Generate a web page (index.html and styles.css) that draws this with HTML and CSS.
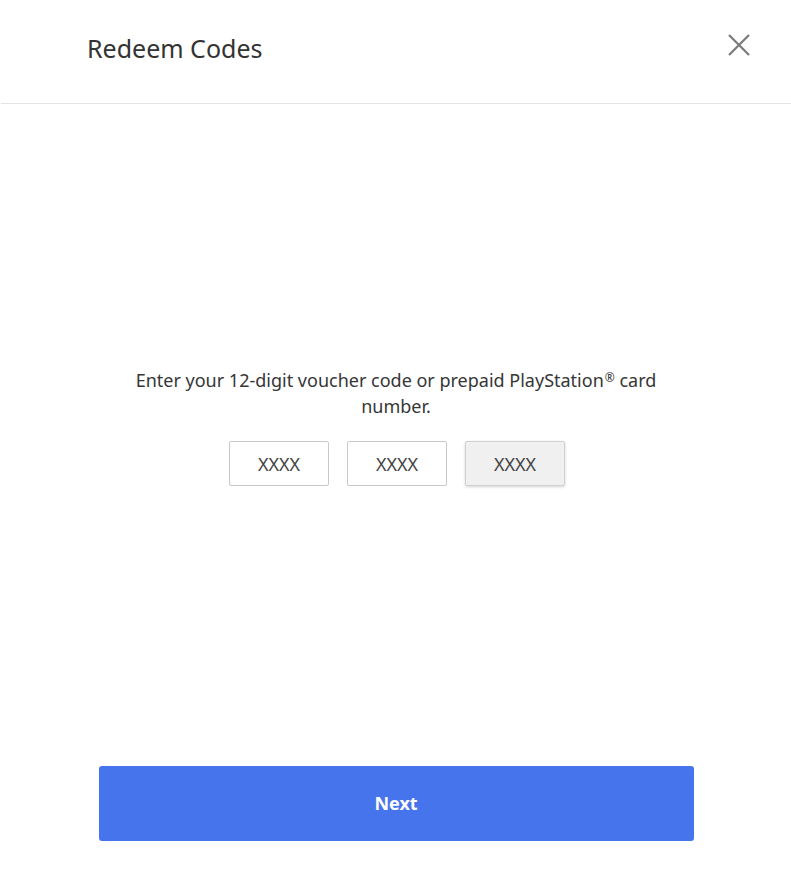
FILE: index.html
```html
<!doctype html>
<html lang="en">
<head>
	<meta charset="UTF-8">
	<title>Redeem Codes</title>
	<link rel="stylesheet" href="styles.css">
</head>
<body>
	<div class="dialog">
		<div class="dialog-head">
			<h1 class="title">Redeem Codes</h1>
			<a class="close" href="javascript:void(0);">
				<svg width="24" height="24" viewBox="0 0 24 24"><path d="M2 2L22 22M22 2L2 22" stroke="#7a7a7a" stroke-width="2.2" fill="none"/></svg>
			</a>
		</div>
		<div class="dialog-body">
			<p class="hint">Enter your 12-digit voucher code or prepaid PlayStation<span class="reg">®</span> card number.</p>
			<div class="code-row">
				<input class="code" type="text" placeholder="XXXX">
				<input class="code" type="text" placeholder="XXXX">
				<input class="code focus" type="text" placeholder="XXXX">
			</div>
		</div>
		<div class="dialog-foot">
			<a class="next-btn" href="javascript:void(0);">Next</a>
		</div>
	</div>
</body>
</html>
```

FILE: styles.css
```css
html, body {
	margin: 0;
	padding: 0;
	background: #fff;
}
body {
	font-family: "Noto Sans", "Open Sans", sans-serif;
	color: #363636;
}
.dialog {
	display: flex;
	flex-direction: column;
	height: 891px;
	padding-left: 1px;
}
.dialog-head {
	height: 104px;
	border-bottom: 1px solid #e3e3e3;
	display: flex;
	align-items: flex-start;
	justify-content: space-between;
	padding: 0 40px 0 86px;
	box-sizing: border-box;
}
.title {
	margin: 31px 0 0;
	font-size: 25px;
	font-weight: normal;
	line-height: 34px;
	color: #333;
}
.close {
	display: block;
	margin-top: 33px;
	width: 24px;
	height: 24px;
}
.dialog-body {
	flex: 1;
	padding-top: 263px;
	text-align: center;
}
.hint {
	width: 580px;
	margin: 0 auto;
	font-size: 18px;
	line-height: 26px;
	color: #363636;
}
.reg {
	font-size: 12px;
	vertical-align: 5px;
	line-height: 0;
	margin-left: 1px;
}
.code-row {
	display: flex;
	justify-content: center;
	gap: 18px;
	margin-top: 22px;
	padding-left: 2px;
}
.code {
	width: 100px;
	height: 45px;
	box-sizing: border-box;
	border: 1px solid #c8c8c8;
	border-radius: 2px;
	text-align: center;
	font-family: inherit;
	font-size: 18px;
	color: #333;
	outline: none;
}
.code::placeholder {
	color: #444;
}
.code.focus {
	background: #f0f0f0;
	border-color: #d0d0d0;
	box-shadow: 0 1px 3px rgba(0,0,0,.18);
}
.dialog-foot {
	display: flex;
	justify-content: center;
	padding-bottom: 50px;
}
.next-btn {
	display: block;
	width: 595px;
	height: 75px;
	line-height: 75px;
	text-align: center;
	background: #4674ec;
	color: #fff;
	font-size: 18px;
	font-weight: bold;
	border-radius: 3px;
	text-decoration: none;
}
```
